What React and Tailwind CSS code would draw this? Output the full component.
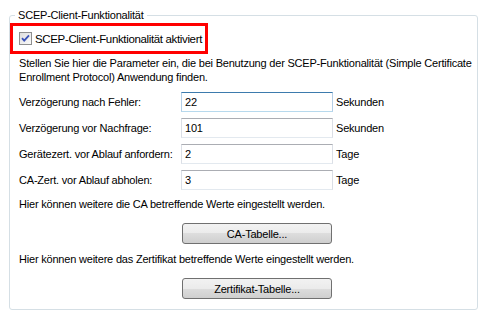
import React from "react";

function CheckBox() {
  return (
    <svg width="13" height="13" viewBox="0 0 13 13" className="shrink-0">
      <defs>
        <linearGradient id="cbg" x1="0" y1="0" x2="1" y2="1">
          <stop offset="0" stopColor="#dcdcdc" />
          <stop offset="1" stopColor="#fbfbfb" />
        </linearGradient>
      </defs>
      <rect x="0.5" y="0.5" width="12" height="12" fill="url(#cbg)" stroke="#8e8f8f" />
      <path d="M3 6.2 L5.2 8.6 L10 3.4" fill="none" stroke="#3a52b8" strokeWidth="1.8" />
    </svg>
  );
}

function Field({ label, value, unit, hover }) {
  return (
    <div className="flex items-center h-[20px] whitespace-nowrap">
      <div className="w-[171px] pl-[9px]">{label}</div>
      <div
        className={
          "w-[152px] h-[20px] flex items-center pl-[3px] bg-white border " +
          (hover
            ? "border-t-[#3d7bad] border-l-[#b5cfe7] border-r-[#b5cfe7] border-b-[#b7d9ed]"
            : "border-t-[#abadb3] border-l-[#dbdfe6] border-r-[#dbdfe6] border-b-[#e3e9ef]")
        }
      >
        {value}
      </div>
      <div className="pl-[3px]">{unit}</div>
    </div>
  );
}

function Btn({ children }) {
  return (
    <div className="ml-[172px] w-[150px] h-[21px] rounded-[3px] border border-[#707070] bg-[linear-gradient(#f2f2f2_0%,#ebebeb_50%,#dddddd_50%,#cfcfcf_100%)] flex items-center justify-center">
      {children}
    </div>
  );
}

export default function App() {
  return (
    <div
      className="w-[484px] h-[318px] bg-white text-black text-[11px] leading-[14px] tracking-[-0.2px] overflow-hidden whitespace-nowrap"
      style={{ fontFamily: '"Liberation Sans", Arial, sans-serif' }}
    >
      <fieldset className="ml-[9px] mt-[8px] w-[469px] h-[302px] border border-[#d5dfe5] rounded-[3px] p-0 m-0">
        <legend className="ml-[5px] px-[3px] leading-[14px]">SCEP-Client-Funktionalität</legend>
        <div className="mt-[1px] w-[198px] h-[31px] border-[3px] border-[#ff0000] flex items-center pl-[6px] gap-[3px]">
          <CheckBox />
          <span className="text-[11.5px] tracking-[-0.35px]">SCEP-Client-Funktionalität aktiviert</span>
        </div>
        <p className="mt-[2px] pl-[9px]">
          Stellen Sie hier die Parameter ein, die bei Benutzung der SCEP-Funktionalität (Simple Certificate
          <br />
          Enrollment Protocol) Anwendung finden.
        </p>
        <div className="mt-[8px] flex flex-col gap-[6px]">
          <Field label="Verzögerung nach Fehler:" value="22" unit="Sekunden" hover />
          <Field label="Verzögerung vor Nachfrage:" value="101" unit="Sekunden" />
          <Field label="Gerätezert. vor Ablauf anfordern:" value="2" unit="Tage" />
          <Field label="CA-Zert. vor Ablauf abholen:" value="3" unit="Tage" />
        </div>
        <p className="mt-[7px] pl-[9px]">Hier können weitere die CA betreffende Werte eingestellt werden.</p>
        <div className="mt-[12px]">
          <Btn>CA-Tabelle...</Btn>
        </div>
        <p className="mt-[8px] pl-[9px]">Hier können weitere das Zertifikat betreffende Werte eingestellt werden.</p>
        <div className="mt-[12px]">
          <Btn>Zertifikat-Tabelle...</Btn>
        </div>
      </fieldset>
    </div>
  );
}
